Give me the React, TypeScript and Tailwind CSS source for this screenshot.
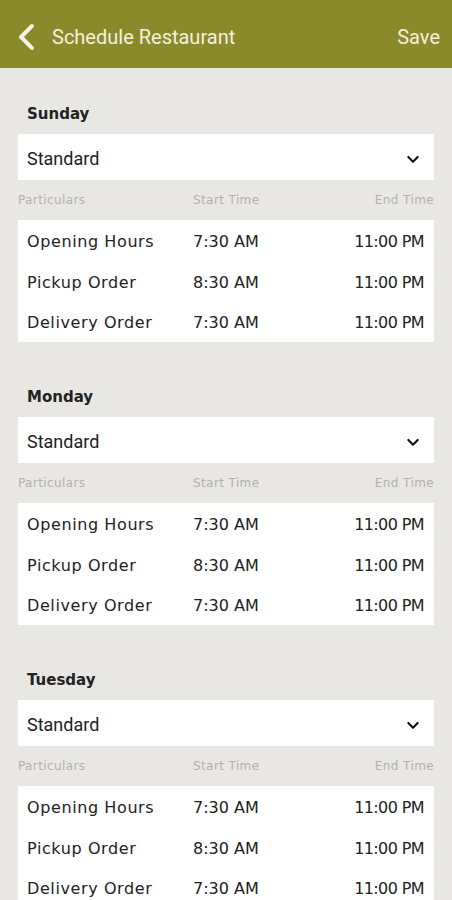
import React from "react";

const days = ["Sunday", "Monday", "Tuesday"];
const rows = [
  ["Opening Hours", "7:30 AM", "11:00 PM"],
  ["Pickup Order", "8:30 AM", "11:00 PM"],
  ["Delivery Order", "7:30 AM", "11:00 PM"],
];

const mont = { fontFamily: '"DejaVu Sans", "Open Sans", sans-serif' };

function Section({ day }: { day: string }) {
  return (
    <div className="mb-[45px]">
      <div className="h-[20px] px-[27px] text-[15px] leading-[20px] font-bold text-[#222]" style={mont}>
        {day}
      </div>
      <div className="mt-[10px] mx-[18px] h-[46px] bg-white flex items-center justify-between pl-[9px] pr-[13px] pt-[3px]">
        <span className="text-[18px] text-[#222]" style={{ fontFamily: 'Roboto, sans-serif' }}>Standard</span>
        <svg width="16" height="16" viewBox="0 0 24 24" fill="none" stroke="#111" strokeWidth="3.2" strokeLinecap="round" strokeLinejoin="round">
          <path d="M5 9l7 7 7-7" />
        </svg>
      </div>
      <div className="mt-[10px] h-[20px] mx-[18px] flex items-center text-[12px] tracking-[0.4px] text-[#b3b1ae]" style={mont}>
        <span className="w-[175px]">Particulars</span>
        <span className="flex-1">Start Time</span>
        <span>End Time</span>
      </div>
      <div className="mt-[10px] mx-[18px] bg-white pt-[2px] h-[122px]">
        {rows.map((r) => (
          <div key={r[0]} className="h-[40.5px] flex items-center pl-[9px] pr-[10px] text-[16px] text-[#222]" style={mont}>
            <span className="w-[166px] tracking-[0.6px]">{r[0]}</span>
            <span className="flex-1">{r[1]}</span>
            <span className="tracking-[-0.6px]">{r[2]}</span>
          </div>
        ))}
      </div>
    </div>
  );
}

export default function App() {
  return (
    <div className="w-[452px] h-[900px] overflow-hidden bg-[#e9e7e4]">
      <div className="h-[68px] bg-[#8b8a2b] flex items-center px-[16px] pt-[6px]">
        <svg width="22" height="28" viewBox="0 0 22 28" fill="none" stroke="#f7f3e3" strokeWidth="4" strokeLinecap="round" strokeLinejoin="round">
          <path d="M16 3L5 14l11 11" />
        </svg>
        <span className="ml-[14px] text-[20px] text-[#f5f0dc] flex-1" style={{ fontFamily: 'Roboto, sans-serif' }}>
          Schedule Restaurant
        </span>
        <span className="text-[20px] text-[#f5f0dc] mr-[-4px]" style={{ fontFamily: 'Roboto, sans-serif' }}>Save</span>
      </div>
      <div className="pt-[36px]">
        {days.map((d) => (
          <Section key={d} day={d} />
        ))}
      </div>
    </div>
  );
}
